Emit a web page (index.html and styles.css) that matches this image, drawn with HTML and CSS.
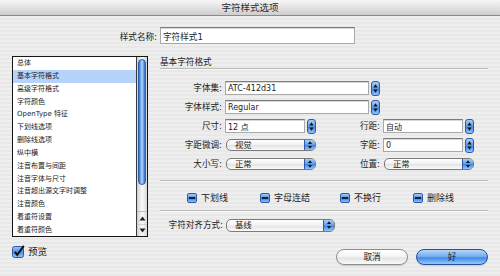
FILE: index.html
```html
<!DOCTYPE html>
<html>
<head>
<meta charset="utf-8">
<link rel="stylesheet" href="styles.css">
</head>
<body>
<div class="window">
  <div class="titlebar">字符样式选项</div>
  <div class="name-row">
    <span class="name-label">样式名称:</span>
    <div class="textfield name-field">字符样式1</div>
  </div>
  <div class="main">
    <div class="sidebar">
      <div class="listbox">
        <ul class="list">
          <li>总体</li>
          <li class="selected">基本字符格式</li>
          <li>高级字符格式</li>
          <li>字符颜色</li>
          <li>OpenType 特征</li>
          <li>下划线选项</li>
          <li>删除线选项</li>
          <li>纵中横</li>
          <li>注音布置与间距</li>
          <li>注音字体与尺寸</li>
          <li>注音超出源文字时调整</li>
          <li>注音颜色</li>
          <li>着重符设置</li>
          <li>着重符颜色</li>
        </ul>
        <div class="scrollbar">
          <div class="track"><div class="thumb"></div></div>
          <div class="arrow-cell"><svg width="7" height="5" viewBox="0 0 7 5"><path d="M3.5 0.5 L6.5 4.5 H0.5Z" fill="#222"/></svg></div>
          <div class="arrow-cell"><svg width="7" height="5" viewBox="0 0 7 5"><path d="M3.5 4.5 L6.5 0.5 H0.5Z" fill="#222"/></svg></div>
        </div>
      </div>
      <div class="preview">
        <svg class="check-big" width="13" height="13" viewBox="0 0 13 13">
          <defs><linearGradient id="cb" x1="0" y1="0" x2="0" y2="1"><stop offset="0" stop-color="#9cc8f6"/><stop offset="0.5" stop-color="#4a8fe4"/><stop offset="1" stop-color="#8fc2f6"/></linearGradient></defs>
          <rect x="0.5" y="1.5" width="11" height="11" rx="2" fill="url(#cb)" stroke="#2d5aa8"/>
          <path d="M2.8 6.8 L5.2 9.8 L11.8 0.8" fill="none" stroke="#111" stroke-width="2"/>
        </svg>
        <span class="preview-text">预览</span>
      </div>
    </div>
    <div class="panel">
      <div class="section-title">基本字符格式</div>
      <div class="rule"></div>
      <div class="form">
        <span class="label c1">字体集:</span>
        <div class="combo wide"><div class="textfield">ATC-412d31</div><span class="stepper"><svg width="9" height="15" viewBox="0 0 9 15"><path d="M4.5 3.2 L6.6 6.4 H2.4Z M4.5 11.8 L6.6 8.6 H2.4Z" fill="#111"/></svg></span></div>
        <span class="label c1">字体样式:</span>
        <div class="combo wide"><div class="textfield">Regular</div><span class="stepper"><svg width="9" height="15" viewBox="0 0 9 15"><path d="M4.5 3.2 L6.6 6.4 H2.4Z M4.5 11.8 L6.6 8.6 H2.4Z" fill="#111"/></svg></span></div>
        <span class="label c1">尺寸:</span>
        <div class="combo"><div class="textfield">12 点</div><span class="stepper"><svg width="9" height="15" viewBox="0 0 9 15"><path d="M4.5 3.2 L6.6 6.4 H2.4Z M4.5 11.8 L6.6 8.6 H2.4Z" fill="#111"/></svg></span></div>
        <span class="label">行距:</span>
        <div class="combo"><div class="textfield">自动</div><span class="stepper"><svg width="9" height="15" viewBox="0 0 9 15"><path d="M4.5 3.2 L6.6 6.4 H2.4Z M4.5 11.8 L6.6 8.6 H2.4Z" fill="#111"/></svg></span></div>
        <span class="label c1">字距微调:</span>
        <div class="popup"><span class="popup-text">视觉</span><span class="cap"><svg width="10" height="12" viewBox="0 0 10 12"><path d="M5 2.2 L7 5 H3Z M5 9.8 L7 7 H3Z" fill="#111"/></svg></span></div>
        <span class="label">字距:</span>
        <div class="combo"><div class="textfield">0</div><span class="stepper"><svg width="9" height="15" viewBox="0 0 9 15"><path d="M4.5 3.2 L6.6 6.4 H2.4Z M4.5 11.8 L6.6 8.6 H2.4Z" fill="#111"/></svg></span></div>
        <span class="label c1">大小写:</span>
        <div class="popup"><span class="popup-text">正常</span><span class="cap"><svg width="10" height="12" viewBox="0 0 10 12"><path d="M5 2.2 L7 5 H3Z M5 9.8 L7 7 H3Z" fill="#111"/></svg></span></div>
        <span class="label">位置:</span>
        <div class="popup"><span class="popup-text">正常</span><span class="cap"><svg width="10" height="12" viewBox="0 0 10 12"><path d="M5 2.2 L7 5 H3Z M5 9.8 L7 7 H3Z" fill="#111"/></svg></span></div>
      </div>
      <div class="rule rule-2"></div>
      <div class="checks">
        <div class="check"><span class="mixbox"></span><span>下划线</span></div>
        <div class="check"><span class="mixbox"></span><span>字母连结</span></div>
        <div class="check"><span class="mixbox"></span><span>不换行</span></div>
        <div class="check"><span class="mixbox"></span><span>删除线</span></div>
      </div>
      <div class="rule rule-3"></div>
      <div class="align-row">
        <span class="label align-label">字符对齐方式:</span>
        <div class="popup align-popup"><span class="popup-text">基线</span><span class="cap"><svg width="10" height="12" viewBox="0 0 10 12"><path d="M5 2.2 L7 5 H3Z M5 9.8 L7 7 H3Z" fill="#111"/></svg></span></div>
      </div>
      <div class="buttons">
        <div class="btn">取消</div>
        <div class="btn default">好</div>
      </div>
    </div>
  </div>
</div>
</body>
</html>
```
FILE: styles.css
```css
* { box-sizing: border-box; }
html, body { margin: 0; padding: 0; }
body { width: 500px; height: 276px; overflow: hidden; }

.window {
  width: 500px;
  height: 276px;
  overflow: hidden;
  font-family: "DejaVu Sans", "Noto Sans CJK SC", sans-serif;
  color: #1c1c1c;
  background: repeating-linear-gradient(to bottom, #eeeeee 0, #eeeeee 2px, #e8e8e8 2px, #e8e8e8 4px);
}

.titlebar {
  height: 16px;
  line-height: 15px;
  font-size: 9.5px;
  text-align: center;
  color: #2a2a2a;
  background: linear-gradient(to bottom, #f6f6f6, #e2e2e2 50%, #cecece);
  border-bottom: 1px solid #8a8a8a;
}

.name-row {
  display: flex;
  align-items: center;
  margin-top: 11px;
  height: 17px;
}
.name-label {
  flex: 0 0 157px;
  text-align: right;
  font-size: 8.6px;
}
.textfield {
  background: #fff;
  border: 1px solid #a8a8a8;
  border-top-color: #7c7c7c;
  box-shadow: inset 0 1px 0 #d8d8d8;
  font-size: 8px;
  padding-left: 2px;
  display: flex;
  align-items: center;
  white-space: nowrap;
}
.name-field {
  margin-left: 3px;
  width: 195px;
  height: 17px;
  font-size: 8.6px;
}

.main {
  display: flex;
  margin-top: 12px;
}

.sidebar {
  margin-left: 12px;
  width: 136px;
}
.listbox {
  display: flex;
  height: 181px;
  border: 1px solid #161616;
  background: #fff;
}
.list {
  flex: 1;
  list-style: none;
  margin: 0;
  padding: 0;
  font-size: 7px;
}
.list li {
  height: 12.85px;
  line-height: 12.85px;
  padding-left: 4px;
  white-space: nowrap;
}
.list li.selected { background: #b6d4fb; }

.scrollbar {
  width: 11px;
  display: flex;
  flex-direction: column;
  border-left: 1px solid #3a3a3a;
  background: linear-gradient(to right, #cfcfcf, #f2f2f2 40%, #f6f6f6 60%, #d6d6d6);
}
.track {
  flex: 1;
  padding: 2px 1px 0 1px;
  border-bottom: 1px solid #bdbdbd;
}
.thumb {
  height: 126px;
  border-radius: 5px;
  border: 1px solid #2f5fae;
  background: linear-gradient(to right, #2d66c8, #7fb5f1 30%, #b4d6fb 50%, #6ea8ec 72%, #2f68c6);
}
.arrow-cell {
  height: 12px;
  display: flex;
  align-items: center;
  justify-content: center;
}
.arrow-cell + .arrow-cell { border-top: 1px solid #d0d0d0; }

.preview {
  display: flex;
  align-items: center;
  margin-top: 7px;
  height: 14px;
}
.check-big { display: block; }
.preview-text {
  font-size: 9.5px;
  margin-left: 3px;
}

.panel {
  margin-left: 12px;
  width: 328px;
  display: flex;
  flex-direction: column;
}
.section-title {
  height: 12px;
  line-height: 12px;
  font-size: 8.6px;
}
.rule {
  height: 2px;
  border-top: 1px solid #b9b9b9;
  border-bottom: 1px solid #f9f9f9;
}

.form {
  margin-top: 10px;
  display: grid;
  grid-template-columns: 62px 91px 61px 91px;
  grid-auto-rows: 16px;
  column-gap: 3px;
  row-gap: 3px;
}
.label {
  text-align: right;
  font-size: 8.6px;
  line-height: 16px;
  white-space: nowrap;
}
.label.c1 { grid-column: 1; }
.combo {
  display: flex;
  align-items: center;
}
.combo.wide { grid-column: 2 / 4; }
.combo .textfield {
  flex: 1;
  height: 14px;
}
.stepper {
  margin-left: 2px;
  width: 9px;
  height: 15px;
  border-radius: 3px;
  border: 1px solid #2c5aa6;
  background: linear-gradient(to bottom, #a9d0f8, #5b9ae6 50%, #3f86e4 55%, #92c6f8);
  display: flex;
  align-items: center;
  justify-content: center;
  overflow: hidden;
}
.stepper svg { display: block; flex: none; }

.popup {
  align-self: center;
  height: 12px;
  display: flex;
  border: 1px solid #7b7b7b;
  border-radius: 5px;
  background: linear-gradient(to bottom, #ffffff, #f1f1f1 50%, #e4e4e4 55%, #fbfbfb);
  overflow: hidden;
  margin-left: 1px;
}
.popup-text {
  flex: 1;
  font-size: 8.4px;
  line-height: 10px;
  padding-left: 8px;
  white-space: nowrap;
}
.cap {
  width: 11px;
  border-left: 1px solid #2c5aa6;
  background: linear-gradient(to bottom, #a9d0f8, #5b9ae6 50%, #3f86e4 55%, #92c6f8);
  display: flex;
  align-items: center;
  justify-content: center;
}
.cap svg { display: block; flex: none; }

.rule-2 { margin-top: 8px; }

.checks {
  margin-top: 9px;
  height: 12px;
  display: grid;
  grid-template-columns: 73px 80px 73px auto;
  padding-left: 27px;
}
.check {
  display: flex;
  align-items: center;
  font-size: 9px;
  white-space: nowrap;
}
.mixbox {
  width: 10px;
  height: 10px;
  margin-right: 4px;
  border-radius: 2px;
  border: 1px solid #2d5aa8;
  background: linear-gradient(to bottom, #a3cdf7, #4f92e5 50%, #3a82e2 55%, #8fc2f6);
  display: flex;
  align-items: center;
  justify-content: center;
}
.mixbox::before {
  content: "";
  width: 6px;
  height: 2px;
  background: #0f1e44;
}

.rule-3 { margin-top: 7px; }

.align-row {
  margin-top: 6px;
  height: 14px;
  display: flex;
  align-items: center;
}
.align-label {
  flex: 0 0 63px;
  line-height: 14px;
}
.align-popup {
  margin-left: 3px;
  width: 109px;
  height: 13px;
}

.buttons {
  margin-top: 17px;
  display: flex;
  justify-content: flex-end;
  gap: 8px;
}
.btn {
  width: 72px;
  height: 16px;
  border-radius: 8px;
  border: 1px solid #8c8c8c;
  background: linear-gradient(to bottom, #ffffff, #f3f3f3 50%, #e2e2e2 55%, #fbfbfb);
  font-size: 8.6px;
  line-height: 14px;
  text-align: center;
  box-shadow: 0 1px 1px rgba(0,0,0,0.15);
}
.btn.default {
  border-color: #2a4f9c;
  background: linear-gradient(to bottom, #b2d6fa, #6eaaee 50%, #3e88e6 55%, #94cafa);
}
```
